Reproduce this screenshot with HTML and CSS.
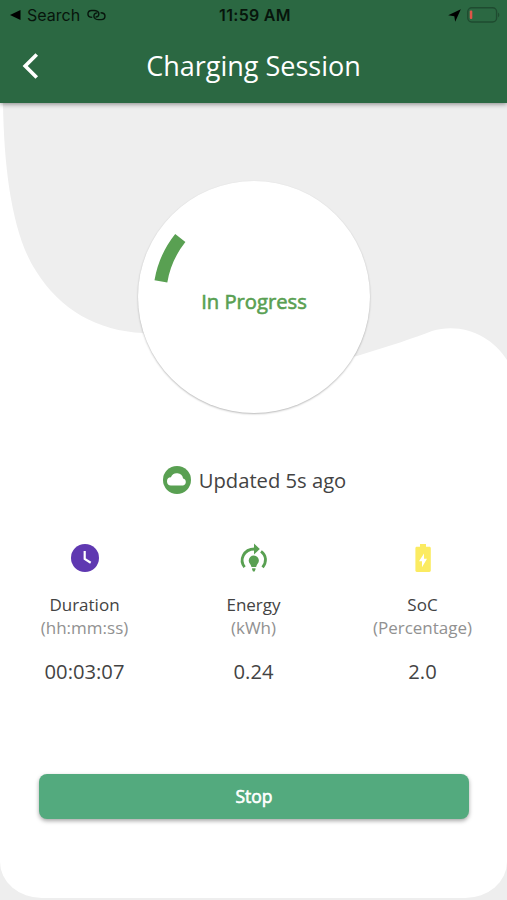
FILE: index.html
```html
<!DOCTYPE html>
<html lang="en">
<head>
    <meta charset="UTF-8">
    <meta name="viewport" content="width=device-width, initial-scale=1.0">
    <title>Charging Session</title>
    <link rel="stylesheet" href="styles.css">
</head>
<body>
    <header class="header">
        <div class="status-bar">
            <div class="status-left">
                <svg class="back-app" viewBox="0 0 11 10"><path d="M0 5 10.500 0v10z"/></svg>
                <span>Search</span>
                <svg class="link-icon" viewBox="0 0 20 12">
                    <path d="M5.500 8.500C2.500 8.500 1 7 1 4.900S2.600 1.200 5 1.200h2.500c2.500 0 5 1.500 5 3.600 0 1.800-1.200 3.400-3.600 3.400"/>
                    <path d="M14.300 3.600c3 0 4.600 1.300 4.600 3.500 0 2.300-1.500 3.800-4 3.800h-2.600c-2.500 0-5-1.500-5-3.700 0-1.900 1.300-3.400 3.700-3.400"/>
                </svg>
            </div>
            <div class="status-time">11:59 AM</div>
            <div class="status-right">
                <svg class="location-icon" viewBox="0 0 13 13"><path d="M12.800.2 7.200 12.800 6.300 7.200.2 6.300z"/></svg>
                <svg class="battery-icon" viewBox="0 0 33 16">
                    <rect x=".8" y=".8" width="28.800" height="14.200" rx="4"/>
                    <path class="battery-tip" d="M31 5.500c1.800.8 1.800 4 0 4.800z"/>
                    <rect class="battery-level" x="2.800" y="3.500" width="2.500" height="8.500" rx="1"/>
                </svg>
            </div>
        </div>
        <div class="title-bar">
            <a href="#" class="back" aria-label="Back">
                <svg viewBox="0 0 17 27"><path d="M15 1.500 3 13.500 15 25.500"/></svg>
            </a>
            <h1 class="title">Charging Session</h1>
        </div>
    </header>

    <main class="session">
        <svg class="wave" viewBox="0 0 507 270" preserveAspectRatio="none">
            <path d="M3 0C4 70 13 133 36 168C60 207 98 228 143 230L254 270L357 253C390 243 414 235 432 228C462 219 492 233 507 257V0z"/>
        </svg>

        <div class="dial">
            <svg class="dial-arc" viewBox="0 0 232 232"><path d="M22.900 100.300A95 95 0 0 1 42.300 57"/></svg>
            <span class="dial-label">In Progress</span>
        </div>

        <div class="updated">
            <svg viewBox="0 0 28 28">
                <circle cx="14" cy="14" r="14"/>
                <path d="M8.300 19.500a4.100 4.100 0 0 1-.4-8.200 6.400 6.400 0 0 1 12.200 1.200 3.600 3.600 0 0 1-.1 7z"/>
            </svg>
            <span>Updated 5s ago</span>
        </div>

        <div class="stats">
            <div class="stat">
                <svg class="stat-icon clock" viewBox="0 0 28 28">
                    <circle cx="14" cy="14" r="14"/>
                    <path d="M13.700 7v8l6 3.700"/>
                </svg>
                <span class="stat-name">Duration</span>
                <span class="stat-unit">(hh:mm:ss)</span>
                <span class="stat-value">00:03:07</span>
            </div>
            <div class="stat">
                <svg class="stat-icon energy" viewBox="0 0 28 28">
                    <path class="ring" d="M4.600 23.200C-1 16.200 3.500 5 14.600 5"/>
                    <path class="ring" d="M21 7.400C26.600 11.500 26.800 18 22.600 23.400"/>
                    <path d="M14-.5 19.800 5 14 10.500zM13.800 11.500a5.100 5.100 0 0 1 5.100 5.100c0 2.400-2 3.700-2.800 6.400h-4.600c-.8-2.700-2.800-4-2.800-6.400a5.100 5.100 0 0 1 5.100-5.100zM12.100 24.200h3.400v1.400L14.600 27.500h-1.600l-.9-1.900z"/>
                </svg>
                <span class="stat-name">Energy</span>
                <span class="stat-unit">(kWh)</span>
                <span class="stat-value">0.24</span>
            </div>
            <div class="stat">
                <svg class="stat-icon soc" viewBox="0 0 28 28">
                    <path d="M11 0h6v2.800h3.400c.8 0 1.400.6 1.400 1.400v22.400c0 .8-.6 1.400-1.400 1.400H7.800c-.8 0-1.400-.6-1.400-1.400V4.200c0-.8.600-1.400 1.400-1.400H11z"/>
                    <path class="bolt" d="M15 9.500 10 17.300h3v6l5-8.600h-3z"/>
                </svg>
                <span class="stat-name">SoC</span>
                <span class="stat-unit">(Percentage)</span>
                <span class="stat-value">2.0</span>
            </div>
        </div>

        <button class="stop" type="button">Stop</button>
    </main>
</body>
</html>
```
FILE: styles.css
```css
* {
    box-sizing: border-box;
}
body {
    height: 900px;
    margin: 0;
    overflow: hidden;
    display: flex;
    flex-direction: column;
    background-color: #eee;
    color: #434343;
    font-family: "Open Sans", sans-serif;
}
svg {
    display: block;
    flex: none;
    overflow: visible;
}
.header {
    position: relative;
    z-index: 2;
    height: 103px;
    flex: none;
    background-color: #2b6842;
    box-shadow: 0 1px 5px rgba(0, 0, 0, 0.45);
}
.status-bar {
    display: grid;
    grid-template-columns: 1fr auto 1fr;
    align-items: center;
    height: 30px;
    padding: 0 7px 0 10px;
    color: #07150c;
    font-family: Inter, sans-serif;
    font-size: 16px;
}
.status-left, .status-right {
    display: flex;
    align-items: center;
}
.status-left {
    gap: 6px;
}
.status-right {
    justify-content: flex-end;
    gap: 6px;
}
.status-time {
    font-weight: 600;
    letter-spacing: 0.3px;
}
.back-app {
    width: 11px;
    height: 10px;
}
.link-icon {
    width: 19px;
    height: 12px;
    margin-left: 1px;
    fill: none;
    stroke: #07150c;
    stroke-width: 1.5;
}
.location-icon {
    width: 13px;
    height: 13px;
}
.battery-icon {
    width: 33px;
    height: 16px;
    fill: none;
    stroke: #1f4b30;
    stroke-width: 1.4;
}
.battery-icon .battery-tip {
    fill: #1f4b30;
    stroke: none;
}
.battery-icon .battery-level {
    fill: #df5548;
    stroke: none;
}
.title-bar {
    display: grid;
    grid-template-columns: 60px 1fr 60px;
    align-items: center;
    height: 72px;
}
.back {
    padding-left: 22px;
}
.back svg {
    width: 17px;
    height: 26px;
    fill: none;
    stroke: #fff;
    stroke-width: 3.8;
}
.title {
    margin: 0;
    color: #fff;
    font-size: 27px;
    font-weight: 400;
    line-height: 36px;
    text-align: center;
}
.session {
    position: relative;
    display: flex;
    flex-direction: column;
    align-items: center;
    height: 795px;
    padding-top: 78px;
    background-color: #fff;
    border-radius: 0 0 42px 42px / 0 0 36px 36px;
}
.wave {
    position: absolute;
    top: 0;
    left: 0;
    width: 100%;
    height: 270px;
    fill: #eee;
}
.dial {
    position: relative;
    display: flex;
    align-items: center;
    justify-content: center;
    width: 232px;
    height: 232px;
    margin-left: 1px;
    flex: none;
    background-color: #fff;
    border-radius: 50%;
    box-shadow: 0 1px 2px rgba(0, 0, 0, 0.28);
}
.dial-arc {
    position: absolute;
    top: 0;
    left: 0;
    width: 232px;
    height: 232px;
    fill: none;
    stroke: #59a052;
    stroke-width: 13;
}
.dial-label {
    padding-top: 7px;
    color: #59a052;
    font-size: 20.2px;
    -webkit-text-stroke: 0.6px #59a052;
}
.updated {
    display: flex;
    align-items: center;
    gap: 8px;
    height: 28px;
    margin-top: 53px;
    margin-left: 2px;
    font-size: 20.2px;
}
.updated svg {
    width: 28px;
    height: 28px;
    fill: #59a052;
}
.updated path {
    fill: #fff;
}
.stats {
    display: grid;
    grid-template-columns: repeat(3, 1fr);
    width: 100%;
    margin-top: 50px;
}
.stat {
    display: flex;
    flex-direction: column;
    align-items: center;
}
.stat-icon {
    width: 28px;
    height: 28px;
    margin-bottom: 21px;
}
.clock {
    fill: #5f38b1;
}
.clock path {
    fill: none;
    stroke: #fff;
    stroke-width: 2.2;
}
.energy {
    fill: #59a052;
}
.energy .ring {
    fill: none;
    stroke: #59a052;
    stroke-width: 2.8;
}
.soc {
    fill: #fbeb61;
}
.soc .bolt {
    fill: #fff;
}
.stat-name, .stat-unit {
    font-size: 17px;
    line-height: 23px;
}
.stat-unit {
    color: #919191;
}
.stat-value {
    margin-top: 18px;
    font-size: 20.2px;
    line-height: 28px;
}
.stop {
    width: 430px;
    height: 45px;
    margin-top: 89px;
    margin-left: 1px;
    padding: 0 0 2px;
    border: none;
    border-radius: 8px;
    background-color: #53aa7e;
    box-shadow: 0 2px 4px rgba(0, 0, 0, 0.35);
    color: #fff;
    font-family: inherit;
    font-size: 17.5px;
    -webkit-text-stroke: 0.6px #fff;
}
```
